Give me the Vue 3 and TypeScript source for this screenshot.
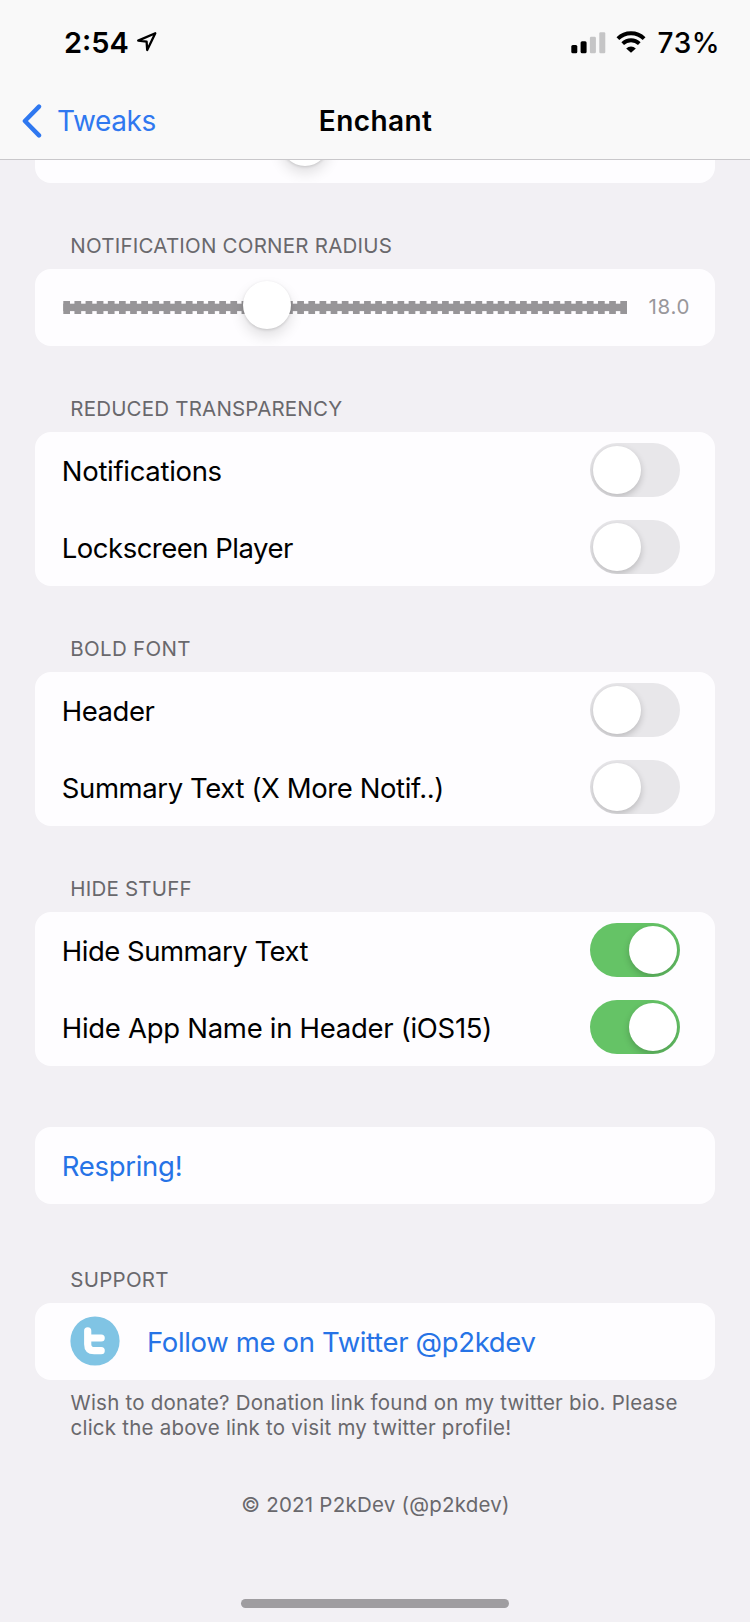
<script setup lang="ts">
import { reactive } from 'vue'

interface ToggleRow {
  label: string
  on: boolean
  tracking: number
}
interface Group {
  title: string
  tracking: number
  rows: ToggleRow[]
}

const groups = reactive<Group[]>([
  {
    title: 'REDUCED TRANSPARENCY',
    tracking: 0.19,
    rows: [
      { label: 'Notifications', on: false, tracking: -0.31 },
      { label: 'Lockscreen Player', on: false, tracking: -0.5 },
    ],
  },
  {
    title: 'BOLD FONT',
    tracking: 0.3,
    rows: [
      { label: 'Header', on: false, tracking: -0.48 },
      { label: 'Summary Text (X More Notif..)', on: false, tracking: -0.4 },
    ],
  },
  {
    title: 'HIDE STUFF',
    tracking: 0.2,
    rows: [
      { label: 'Hide Summary Text', on: true, tracking: -0.5 },
      { label: 'Hide App Name in Header (iOS15)', on: true, tracking: -0.29 },
    ],
  },
])

const ticks = Array.from({ length: 51 }, (_, i) => 0.3 + i * 11.14)
</script>

<template>
  <div class="screen">
    <header class="top">
      <div class="status">
        <span class="time">2:54</span>
        <svg class="location" width="22" height="22" viewBox="0 0 22 22">
          <path d="M19.3 2.2 2.2 9.6 10.6 10.6 11.2 19Z" fill="none" stroke="#000" stroke-width="2.3" stroke-linejoin="round" />
        </svg>
        <span class="spacer"></span>
        <svg class="signal" width="35" height="22" viewBox="0 0 35 22">
          <rect x="0.3" y="13" width="6" height="8.3" rx="1.5" />
          <rect x="9.6" y="9.2" width="6" height="12.1" rx="1.5" />
          <rect x="18.9" y="4.7" width="6" height="16.6" rx="1.3" fill="#c5c5c6" />
          <rect x="28.3" y="0.3" width="6" height="21" rx="1.3" fill="#c5c5c6" />
        </svg>
        <svg class="wifi" width="30" height="22" viewBox="0 0 30 22">
          <path d="M1.9 7.6A18.8 18.8 0 0 1 28.1 7.6" fill="none" stroke="#000" stroke-width="4" />
          <path d="M6.7 12.6A12 12 0 0 1 23.3 12.6" fill="none" stroke="#000" stroke-width="3.8" />
          <path d="M10.2 17.4A7 7 0 0 1 19.8 17.4L15 21.8Z" />
        </svg>
        <span class="battery">73%</span>
      </div>
      <nav class="nav">
        <a class="back">
          <svg class="chevron" width="20" height="34" viewBox="0 0 20 34">
            <path d="M17 2.6 2.9 17 17 31.4" fill="none" stroke="#2f78f0" stroke-width="4.4" stroke-linecap="round" stroke-linejoin="round" />
          </svg>
          <span>Tweaks</span>
        </a>
        <h1 class="title">Enchant</h1>
        <span></span>
      </nav>
    </header>

    <main class="list">
      <div class="card clipped"><i class="thumb"></i></div>

      <h2 class="caption radius">NOTIFICATION CORNER RADIUS</h2>
      <div class="card">
        <div class="row">
          <div class="slider">
            <svg class="track" width="564" height="13" viewBox="0 0 564 13">
              <rect x="0.3" y="2.7" width="563.5" height="7.4" fill="#979598" />
              <rect v-for="x in ticks" :key="x" :x="x" y="0" width="6.7" height="13" fill="#979598" />
            </svg>
            <i class="thumb"></i>
          </div>
          <span class="value">18.0</span>
        </div>
      </div>

      <template v-for="group in groups" :key="group.title">
        <h2 class="caption" :style="{ letterSpacing: group.tracking + 'px' }">{{ group.title }}</h2>
        <div class="card">
          <div v-for="row in group.rows" :key="row.label" class="row">
            <span class="label" :style="{ letterSpacing: row.tracking + 'px' }">{{ row.label }}</span>
            <button class="switch" :class="{ on: row.on }" type="button" role="switch" :aria-checked="row.on" @click="row.on = !row.on">
              <i class="knob"></i>
            </button>
          </div>
        </div>
      </template>

      <div class="card action">
        <div class="row"><a class="label link respring">Respring!</a></div>
      </div>

      <h2 class="caption support">SUPPORT</h2>
      <div class="card">
        <div class="row">
          <svg class="twitter" width="50" height="50" viewBox="0 0 50 50">
            <circle cx="25" cy="25" r="24.6" fill="#80c4e4" />
            <path d="M17.7 14.8V28.3Q17.7 34.7 24.1 34.7H31.2M17.7 22H31.2" fill="none" stroke="#fff" stroke-width="7.2" stroke-linecap="round" stroke-linejoin="round" />
          </svg>
          <a class="label link follow">Follow me on Twitter @p2kdev</a>
        </div>
      </div>
      <p class="note">Wish to donate? Donation link found on my twitter bio. Please<br />click the above link to visit my twitter profile!</p>
      <p class="copyright">© 2021 P2kDev (@p2kdev)</p>
    </main>

    <div class="home"></div>
  </div>
</template>

<style>
body {
  background: #f2f0f4;
}
</style>

<style scoped>
.screen {
  box-sizing: border-box;
  display: flex;
  flex-direction: column;
  width: 750px;
  height: 1622px;
  overflow: hidden;
  background: #f2f0f4;
  font-family: Inter, "Liberation Sans", sans-serif;
  color: #000;
}
.top {
  box-sizing: border-box;
  flex: none;
  height: 160px;
  border-bottom: 1px solid #c9c8cb;
  background: #f9f9f9;
}
.status {
  display: flex;
  align-items: center;
  height: 38px;
  padding: 23.5px 30px 0 64px;
}
.time {
  font-size: 29px;
  font-weight: 600;
  letter-spacing: 0;
}
.location {
  margin: -1px 0 0 7px;
}
.spacer {
  flex: 1;
}
.wifi {
  margin-left: 10px;
  margin-top: -2px;
}
.battery {
  margin-left: 12px;
  font-size: 28px;
  font-weight: 500;
  letter-spacing: 0.5px;
}
.nav {
  display: grid;
  grid-template-columns: 1fr auto 1fr;
  align-items: center;
  height: 60px;
  margin-top: 29.5px;
  padding: 0 21px 0 22px;
}
.back {
  display: flex;
  align-items: center;
  color: #2f78f0;
  font-size: 28px;
  letter-spacing: -0.38px;
}
.chevron {
  margin-right: 15px;
}
.title {
  margin: 0;
  font-size: 28px;
  font-weight: 600;
  letter-spacing: 0.4px;
}
.list {
  flex: 1;
  padding: 0 35px;
}
.card {
  border-radius: 16px;
  background: #fefdff;
}
.clipped {
  height: 22.8px;
  border-radius: 0 0 16px 16px;
  overflow: hidden;
}
.clipped .thumb {
  display: block;
  margin: -42px 0 0 246px;
}
.caption {
  box-sizing: border-box;
  height: 86.4px;
  margin: 0;
  padding: 51px 0 0 35.3px;
  color: #69686c;
  font-size: 20.5px;
  font-weight: 400;
  line-height: 24px;
}
.radius {
  height: 86px;
  letter-spacing: 0.22px;
}
.support {
  height: 99.2px;
  padding-top: 63.8px;
  letter-spacing: 0.25px;
}
.row {
  box-sizing: border-box;
  display: flex;
  align-items: center;
  height: 76.8px;
  padding: 0 35.3px 0 26.8px;
}
.label {
  margin-top: 1px;
  font-size: 27.5px;
  line-height: 34px;
  white-space: nowrap;
}
.slider {
  display: grid;
  flex: none;
  align-items: center;
  margin-left: 1.2px;
}
.slider > * {
  grid-area: 1 / 1;
}
.track {
  margin-top: 1px;
}
.slider .thumb {
  margin: -4px 0 0 180.5px;
}
.thumb {
  width: 48px;
  height: 48px;
  border-radius: 50%;
  background: #fff;
  box-shadow: 0 1px 3px rgba(0, 0, 0, 0.14), 0 7px 14px rgba(0, 0, 0, 0.12);
}
.value {
  flex: none;
  margin: -1px 0 0 21.5px;
  color: #99979b;
  font-size: 20.5px;
  letter-spacing: 0.7px;
}
.switch {
  box-sizing: border-box;
  flex: none;
  width: 89.5px;
  height: 54px;
  margin: -1px 0 0 auto;
  padding: 3px;
  border: 0;
  border-radius: 27px;
  background: #e8e7ea;
  overflow: hidden;
}
.knob {
  display: block;
  width: 48px;
  height: 48px;
  border-radius: 50%;
  background: #fff;
  box-shadow: 0 3px 7px rgba(0, 0, 0, 0.2);
}
.on {
  background: #65c366;
}
.on .knob {
  margin-left: 35.5px;
}
.action {
  margin-top: 61.4px;
}
.link {
  color: #2673e6;
}
.respring {
  letter-spacing: -0.3px;
}
.twitter {
  flex: none;
  margin-left: 8.7px;
}
.follow {
  margin-left: 26.5px;
  letter-spacing: -0.35px;
}
.note,
.copyright {
  margin: 0;
  color: #69686c;
  font-size: 20.5px;
  line-height: 24.5px;
  letter-spacing: 0.23px;
}
.note {
  padding: 11.4px 0 0 35.5px;
  white-space: nowrap;
}
.copyright {
  margin-top: 53px;
  padding-left: 1px;
  text-align: center;
}
.home {
  flex: none;
  width: 268px;
  height: 9px;
  margin: 0 auto 14px;
  border-radius: 5px;
  background: #9f9da0;
}
</style>
